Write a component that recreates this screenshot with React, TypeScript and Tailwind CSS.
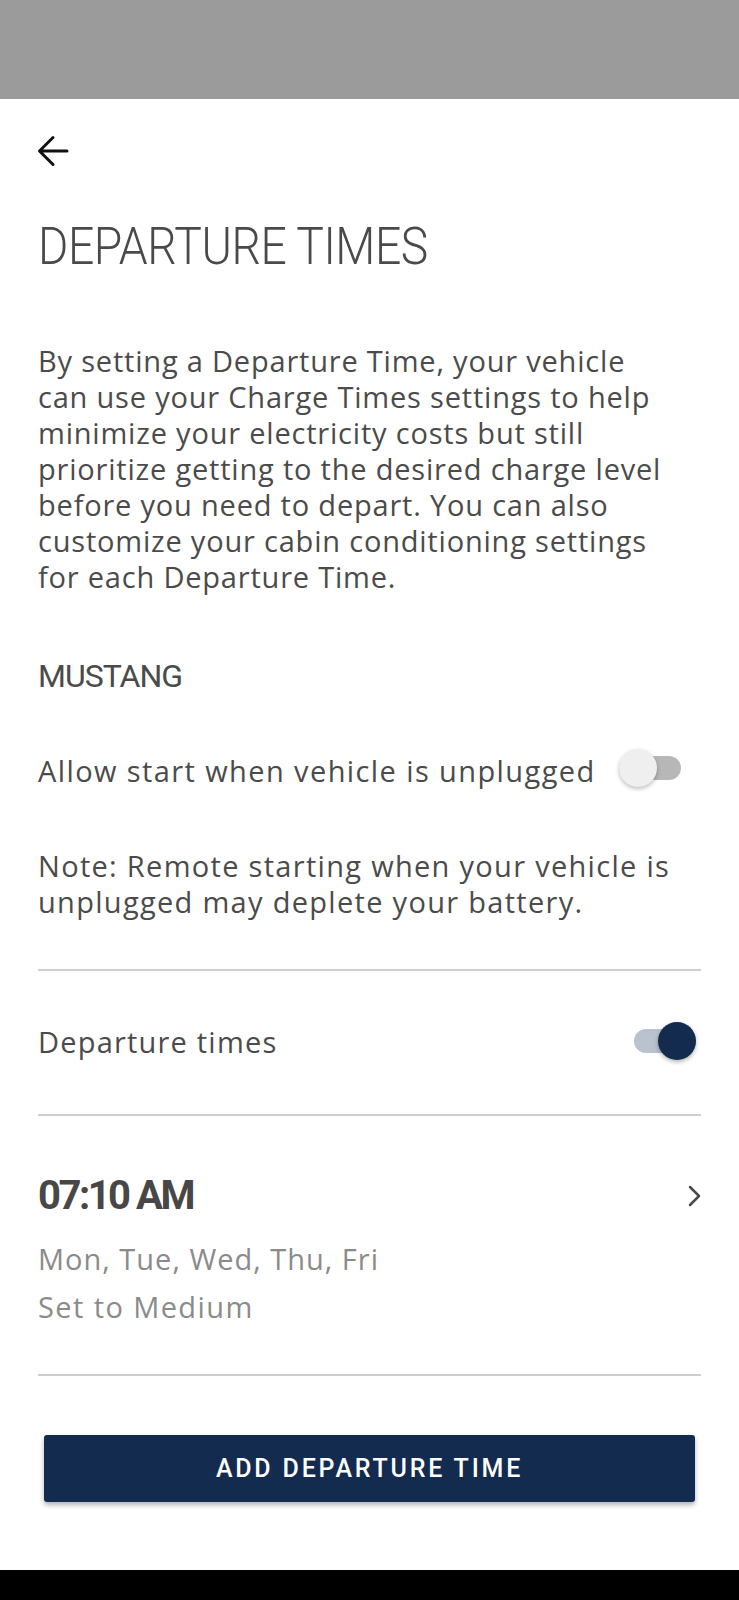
import React from 'react';

function Toggle({ on }: { on: boolean }) {
  return (
    <div className="relative w-[62px] h-[38px] shrink-0">
      <div
        className={
          on
            ? 'absolute left-0 right-0 top-[7px] h-[24px] rounded-full bg-[#b9c2ce]'
            : 'absolute left-0 right-0 top-[7px] h-[24px] rounded-full bg-[#b7b7b7]'
        }
      />
      <div
        className={
          on
            ? 'absolute top-0 right-0 w-[38px] h-[38px] rounded-full bg-[#132b4f] shadow-[0_2px_4px_rgba(0,0,0,0.3)]'
            : 'absolute top-0 left-0 w-[38px] h-[38px] rounded-full bg-[#efefef] shadow-[0_2px_4px_rgba(0,0,0,0.25)]'
        }
      />
    </div>
  );
}

function Divider() {
  return <div className="h-[2px] bg-[#cfcfcf]" />;
}

export default function App() {
  return (
    <div className="w-[739px] h-[1600px] flex flex-col bg-white font-['Open_Sans',sans-serif] text-[#4b4b4b]">
      {/* status bar */}
      <div className="h-[99px] bg-[#9b9b9b] shrink-0" />

      <div className="flex-1 px-[38px]">
        {/* back */}
        <div className="h-[104px] flex items-center">
          <svg width="32" height="32" viewBox="0 0 32 32" fill="none" className="-ml-[1px]">
            <path
              d="M30 16H3M16 2.5L2.5 16L16 29.5"
              stroke="#111"
              strokeWidth="3"
              strokeLinecap="round"
              strokeLinejoin="round"
            />
          </svg>
        </div>

        <h1 className="mt-[14px] text-[52px] leading-[60px] font-light font-['Roboto',sans-serif] text-[#4a4a4a] tracking-[-0.5px] whitespace-nowrap origin-left scale-x-[0.89]">
          DEPARTURE TIMES
        </h1>

        <p className="mt-[66px] text-[29px] leading-[36px] whitespace-nowrap tracking-[0.8px]">
          By setting a Departure Time, your vehicle
          <br />
          can use your Charge Times settings to help
          <br />
          minimize your electricity costs but still
          <br />
          prioritize getting to the desired charge level
          <br />
          before you need to depart. You can also
          <br />
          customize your cabin conditioning settings
          <br />
          for each Departure Time.
        </p>

        <h2 className="mt-[61px] text-[32px] leading-[40px] font-['Roboto',sans-serif] tracking-[-1px]">MUSTANG</h2>

        <div className="mt-[51px] h-[48px] flex items-center justify-between">
          <span className="text-[29px] leading-[36px] tracking-[1.4px] whitespace-nowrap">Allow start when vehicle is unplugged</span>
          <div className="mr-[20px] -mt-[6px]">
            <Toggle on={false} />
          </div>
        </div>

        <p className="mt-[53px] text-[29px] leading-[36px] whitespace-nowrap tracking-[1.3px]">
          Note: Remote starting when your vehicle is
          <br />
          unplugged may deplete your battery.
        </p>

        <div className="mt-[49px]">
          <Divider />
        </div>

        <div className="mt-[47px] h-[48px] flex items-center justify-between">
          <span className="text-[29px] leading-[36px] tracking-[1.2px]">Departure times</span>
          <div className="mr-[5px] -mt-[2px]">
            <Toggle on />
          </div>
        </div>

        <div className="mt-[48px]">
          <Divider />
        </div>

        <div className="mt-[56px] h-[48px] flex items-center justify-between">
          <span className="text-[40px] leading-[48px] font-bold font-['Roboto',sans-serif] text-[#474747] tracking-[-2.5px]">07:10 AM</span>
          <svg width="14" height="22" viewBox="0 0 14 22" fill="none">
            <path d="M3 2l9 9-9 9" stroke="#4a4a4a" strokeWidth="2.5" strokeLinecap="round" strokeLinejoin="round" />
          </svg>
        </div>

        <div className="mt-[15px] text-[29px] leading-[48px] text-[#8b8b8b]">
          <p className="tracking-[1px]">Mon, Tue, Wed, Thu, Fri</p>
          <p className="tracking-[1.4px]">Set to Medium</p>
        </div>

        <div className="mt-[43px]">
          <Divider />
        </div>

        <button className="mt-[59px] ml-[6px] w-[651px] h-[67px] rounded-[3px] bg-[#132b4f] text-white text-[25px] font-medium font-['Roboto',sans-serif] tracking-[2.8px] shadow-[0_3px_5px_rgba(0,0,0,0.3)] flex items-center justify-center">
          ADD DEPARTURE TIME
        </button>
      </div>

      {/* nav bar */}
      <div className="h-[30px] bg-black shrink-0" />
    </div>
  );
}
